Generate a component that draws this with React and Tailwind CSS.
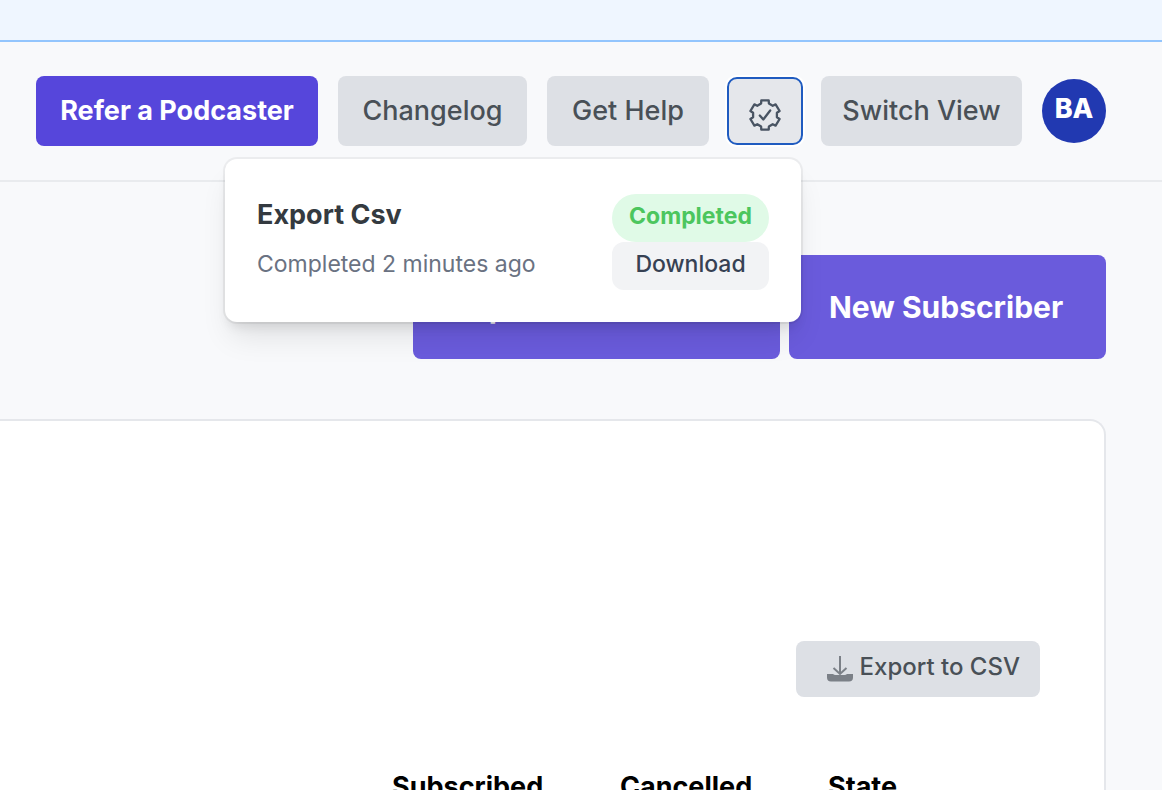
import React, { useState } from 'react';

const COLUMNS = ['Subscribed', 'Cancelled', 'State'];

function TasksIcon() {
  return (
    <svg className="size-8" viewBox="0 0 32 32" fill="none" stroke="currentColor" strokeWidth="2.3" strokeLinejoin="round" strokeLinecap="round" aria-hidden="true">
      <path d="M12.300 1.300H19.700L19.900 4.500 23.700 6.800 26.600 5.400 30.600 12 27.900 13.700V18.300L30.600 20 26.600 26.600 23.700 25.200 19.900 27.500 19.700 30.700H12.300L12.100 27.500 8.300 25.200 5.400 26.600 1.400 20 4.100 18.300V13.700L1.400 12 5.400 5.400 8.300 6.800 12.100 4.500z" />
      <path d="M10.800 16.500 14.300 20.500 21.200 11.500" />
    </svg>
  );
}

function DownloadIcon() {
  return (
    <svg className="h-7 w-7" viewBox="0 0 28 28" fill="none" stroke="currentColor" strokeWidth="2" aria-hidden="true">
      <path d="M14 1v18M7.500 13l6.500 6 6.500-6" />
      <path d="M1 19h6q1 1 2.500 1h9q1.500 0 2.500-1h6v3.500q0 4-4 4H5q-4 0-4-4z" fill="currentColor" stroke="none" />
    </svg>
  );
}

function HeaderButton({ width, children }) {
  return (
    <button type="button" className={`h-[70px] shrink-0 rounded-lg bg-[#dde0e5] text-[27px] leading-9 font-medium text-[#495057] ${width}`}>
      {children}
    </button>
  );
}

function PageButton({ width, children }) {
  return (
    <button type="button" className={`h-[104px] shrink-0 rounded-lg bg-[#6a5bdc] px-10 text-left text-[30px] font-bold whitespace-nowrap text-white ${width}`}>
      {children}
    </button>
  );
}

function TasksMenu() {
  const [open, setOpen] = useState(true);

  return (
    <div className="relative -mx-0.5 shrink-0">
      <button
        type="button"
        aria-label="Tasks"
        aria-expanded={open}
        onClick={() => setOpen(!open)}
        className="flex h-[68px] w-[76px] items-center justify-center rounded-[10px] border-2 border-[#1f5bc0] bg-gray-200 pt-2 text-[#495463] ring-2 ring-white"
      >
        <TasksIcon />
      </button>
      {open && (
        <div className="absolute top-full right-0.5 z-10 mt-3.5 flex w-[576px] justify-between rounded-xl bg-white px-8 pt-[35px] pb-8 shadow-[0_20px_30px_-6px_rgb(0_0_0/0.1),0_8px_12px_-4px_rgb(0_0_0/0.1)] ring-2 ring-black/5">
          <div>
            <h2 className="text-[27px] leading-[42px] font-bold text-[#343a40]">Export Csv</h2>
            <p className="mt-2.5 text-[23px] leading-9 text-gray-500">Completed 2 minutes ago</p>
          </div>
          <div className="flex w-[157px] flex-col">
            <span className="h-12 rounded-full bg-[#e0fae7] text-center text-[23px] leading-11 font-bold text-[#4cc65e]">Completed</span>
            <button type="button" className="h-12 rounded-xl bg-[#f2f3f5] pb-1 text-[23px] font-medium text-gray-700">Download</button>
          </div>
        </div>
      )}
    </div>
  );
}

export default function App() {
  return (
    <div className="h-screen overflow-hidden bg-[#f8f9fb] font-['Inter',sans-serif]">
      <div className="h-[42px] border-b-2 border-[#93c5fd] bg-blue-50" />

      <header className="flex h-[140px] items-center justify-end gap-5 border-b-2 border-[#e9ebee] px-14">
        <button type="button" className="h-[70px] w-[282px] shrink-0 rounded-lg bg-[#5646db] text-[27px] leading-9 font-bold text-white">
          Refer a Podcaster
        </button>
        <HeaderButton width="w-[189px]">Changelog</HeaderButton>
        <HeaderButton width="w-[162px]">Get Help</HeaderButton>
        <TasksMenu />
        <HeaderButton width="w-[201px]">Switch View</HeaderButton>
        <button type="button" className="size-16 shrink-0 rounded-full bg-[#2139b1] pb-1 text-[27px] font-extrabold text-white">BA</button>
      </header>

      <main className="pt-[73px] pr-14">
        <div className="flex justify-end gap-[9px]">
          <PageButton width="w-[367px]">Import Subscribers</PageButton>
          <PageButton width="w-[317px]">New Subscriber</PageButton>
        </div>

        <section className="mt-15 rounded-tr-2xl border-t-2 border-r-2 border-gray-200 bg-white pt-55 pr-16">
          <div className="flex justify-end">
            <button type="button" className="flex h-14 items-center gap-1.5 rounded-lg bg-[#dde0e5] pr-5 pl-[30px] text-2xl font-medium text-[#495057]">
              <span className="text-[#7b8087]"><DownloadIcon /></span>
              <span className="pb-1">Export to CSV</span>
            </button>
          </div>
          <table className="mt-16 w-full table-fixed text-left">
            <colgroup>
              <col />
              <col className="w-[228px]" />
              <col className="w-[208px]" />
              <col className="w-[212px]" />
            </colgroup>
            <thead>
              <tr>
                <td />
                {COLUMNS.map((c) => (
                  <th key={c} scope="col" className="py-2 text-[27px] leading-9 font-bold text-black">{c}</th>
                ))}
              </tr>
            </thead>
          </table>
        </section>
      </main>
    </div>
  );
}
